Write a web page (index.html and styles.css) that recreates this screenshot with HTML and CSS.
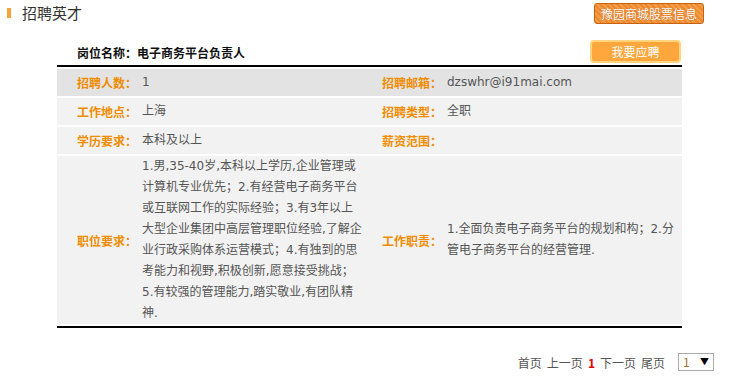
FILE: index.html
```html
<!DOCTYPE html>
<html lang="zh-CN">
<head>
    <meta charset="UTF-8">
    <title>招聘英才</title>
    <link rel="stylesheet" href="styles.css">
</head>
<body>

    <div class="head">
        <h2 class="head-title">招聘英才</h2>
        <a class="stock-btn" href="#">豫园商城股票信息</a>
    </div>

    <div class="job">
        <div class="job-top">
            <strong class="job-name">岗位名称：电子商务平台负责人</strong>
            <a class="apply-btn" href="#">我要应聘</a>
        </div>

        <table class="job-table">
            <tr class="first">
                <th>招聘人数：</th>
                <td class="val-left">1</td>
                <th>招聘邮箱：</th>
                <td>dzswhr@i91mai.com</td>
            </tr>
            <tr>
                <th>工作地点：</th>
                <td class="val-left">上海</td>
                <th>招聘类型：</th>
                <td>全职</td>
            </tr>
            <tr>
                <th>学历要求：</th>
                <td class="val-left">本科及以上</td>
                <th>薪资范围：</th>
                <td></td>
            </tr>
            <tr>
                <th>职位要求：</th>
                <td class="val-left">1.男,35-40岁,本科以上学历,企业管理或<br>计算机专业优先；2.有经营电子商务平台<br>或互联网工作的实际经验；3.有3年以上<br>大型企业集团中高层管理职位经验,了解企<br>业行政采购体系运营模式；4.有独到的思<br>考能力和视野,积极创新,愿意接受挑战；<br>5.有较强的管理能力,踏实敬业,有团队精<br>神.</td>
                <th>工作职责：</th>
                <td>1.全面负责电子商务平台的规划和构；2.分<br>管电子商务平台的经营管理.</td>
            </tr>
        </table>
    </div>

    <div class="pager">
        <a href="#">首页</a>
        <a href="#">上一页</a>
        <span class="current">1</span>
        <a href="#">下一页</a>
        <a href="#">尾页</a>
        <span class="page-select">1 <i>▼</i></span>
    </div>

</body>
</html>
```

FILE: styles.css
```css
body {
    margin: 0;
    font-family: "DejaVu Sans", "Noto Sans CJK SC", sans-serif;
    font-size: 12px;
    color: #555;
    background: #fff;
}

a {
    text-decoration: none;
}

.head {
    height: 28px;
    display: flex;
    align-items: flex-start;
    justify-content: space-between;
    padding: 0 28px 0 7px;
}

.head-title {
    margin: 0;
    padding-left: 11px;
    border-left: 4px solid #f7a33a;
    margin-top: 8px;
    height: 10px;
    line-height: 10px;
    font-family: "Noto Sans CJK SC", sans-serif;
    font-size: 15px;
    font-weight: normal;
    color: #333;
}

.stock-btn {
    margin-top: 3px;
    width: 108px;
    height: 19px;
    line-height: 19px;
    text-align: center;
    color: #fff;
    font-family: "Noto Sans CJK SC", sans-serif;
    font-size: 12px;
    border: 1px solid #c7620c;
    border-radius: 3px;
    background: repeating-linear-gradient(45deg, #ee8a2e 0 2px, #f49c4a 2px 4px);
    text-shadow: 0 0 1px #b0560a;
}

.job {
    margin: 12px 50px 0 57px;
}

.job-top {
    height: 25px;
    display: flex;
    justify-content: space-between;
    align-items: flex-start;
    padding-left: 20px;
}

.job-name {
    margin-top: 6px;
    font-family: "Noto Sans CJK SC", sans-serif;
    font-size: 12px;
    line-height: 14px;
    color: #111;
}

.apply-btn {
    margin-right: 1px;
    width: 87px;
    height: 19px;
    line-height: 19px;
    text-align: center;
    color: #fff;
    font-family: "Noto Sans CJK SC", sans-serif;
    font-size: 12px;
    background: #ffa63d;
    border: 2px solid #ffd47e;
    border-radius: 4px;
}

.job-table {
    width: 100%;
    border-collapse: separate;
    border-spacing: 0 2px;
    border-top: 2px solid #000;
    border-bottom: 2px solid #000;
}

.job-table tr {
    background: #f2f2f2;
}

.job-table tr.first {
    background: #e3e3e3;
}

.job-table th,
.job-table td {
    padding: 3px 0;
    line-height: 21px;
    vertical-align: middle;
}

.job-table th {
    width: 80px;
    text-align: right;
    font-family: "Noto Sans CJK SC", sans-serif;
    font-weight: bold;
    color: #f08c00;
    white-space: nowrap;
}

.job-table td {
    padding-left: 5px;
    text-align: left;
}

.job-table tr:last-child td,
.job-table tr:last-child th {
    padding: 0;
}

.job-table tr:last-child td {
    padding-left: 5px;
}

.job-table td.val-left {
    width: 220px;
}

.pager {
    margin-top: 25px;
    padding-right: 18px;
    display: flex;
    justify-content: flex-end;
    align-items: center;
    gap: 5px;
    font-family: "Noto Sans CJK SC", sans-serif;
}

.pager a {
    color: #555;
}

.pager .current {
    color: #e60000;
    font-weight: bold;
}

.page-select {
    margin-left: 8px;
    width: 32px;
    height: 16px;
    line-height: 16px;
    border: 1px solid #a9a9a9;
    padding-left: 4px;
    box-sizing: content-box;
    color: #a0702a;
    font-size: 12px;
    display: flex;
    justify-content: space-between;
    padding-right: 4px;
    width: 26px;
}

.page-select i {
    font-style: normal;
    color: #000;
    font-size: 9px;
}
```
